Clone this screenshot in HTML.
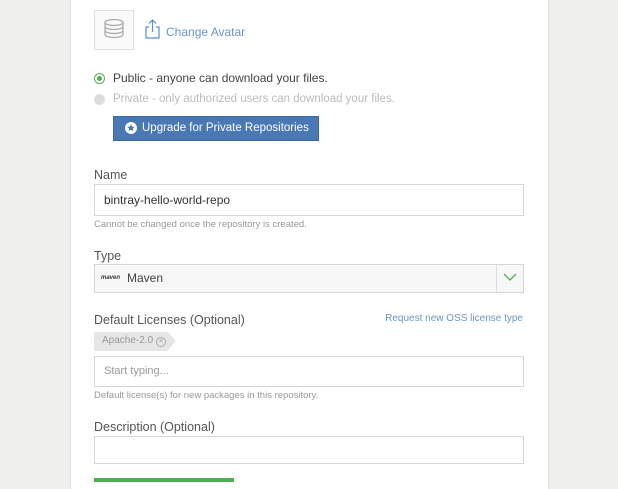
<!DOCTYPE html>
<html><head><style>
body{margin:0;width:618px;height:480px;background:#efefed;font-family:"Liberation Sans",sans-serif;overflow:hidden;position:relative}
.panel{position:absolute;left:70px;top:-1px;width:477px;height:490px;background:#fff;border-left:1px solid #ddd;border-right:1px solid #ddd}
.a{position:absolute;white-space:nowrap}
.inp{position:absolute;left:94px;width:428px;border:1px solid #d6d6d6;background:#fff}
.lbl{font-size:12.5px;color:#555}
.help{font-size:9.5px;color:#999}
</style></head><body>
<div class="panel"></div>
<div class="a" style="left:94px;top:10px;width:38px;height:38px;border:1px solid #ddd;background:#fafafa"></div>
<svg class="a" style="left:103px;top:18px" width="22" height="22" viewBox="0 0 22 22" fill="none" stroke="#aaa" stroke-width="1.3"><ellipse cx="11" cy="4.5" rx="9" ry="3"/><path d="M2 4.5v12c0 1.7 4 3 9 3s9-1.3 9-3v-12M2 8.5c0 1.7 4 3 9 3s9-1.3 9-3M2 12.5c0 1.7 4 3 9 3s9-1.3 9-3"/></svg>
<svg class="a" style="left:145px;top:19px" width="15" height="20" viewBox="0 0 15 20" fill="none" stroke="#5b8fc7" stroke-width="1.2"><path d="M4 8H1v11h13V8h-3M7.5 13V1M4 4.5L7.5 1 11 4.5"/></svg>
<div class="a" style="left:166px;top:25px;font-size:12px;color:#6d95c0">Change Avatar</div>
<div class="a" style="left:94px;top:73px;width:9px;height:9px;border:1px solid #5cac5c;border-radius:50%"></div>
<div class="a" style="left:97px;top:76px;width:5px;height:5px;background:#4caf50;border-radius:50%"></div>
<div class="a" style="left:113px;top:71px;font-size:12px;color:#444">Public - anyone can download your files.</div>
<div class="a" style="left:94px;top:94px;width:11px;height:11px;background:#ddd;border-radius:50%"></div>
<div class="a" style="left:113px;top:93px;font-size:11.5px;color:#bbb">Private - only authorized users can download your files.</div>
<div class="a" style="left:113px;top:116px;width:204px;height:23px;background:#4a78b4;border:1px solid #3e68a0"></div>
<svg class="a" style="left:125px;top:122px" width="12" height="12" viewBox="0 0 12 12"><circle cx="6" cy="6" r="6" fill="#fff"/><path d="M6 2.3l1.1 2.3 2.5.3-1.8 1.7.5 2.5L6 7.9 3.7 9.1l.5-2.5-1.8-1.7 2.5-.3z" fill="#4a78b4"/></svg>
<div class="a" style="left:142px;top:121px;font-size:11.5px;line-height:14px;color:#fff">Upgrade for Private Repositories</div>
<div class="a lbl" style="left:94px;top:168px">Name</div>
<div class="inp" style="top:184px;height:30px"></div>
<div class="a" style="left:104px;top:193px;font-size:12px;color:#333">bintray-hello-world-repo</div>
<div class="a help" style="left:94px;top:219px">Cannot be changed once the repository is created.</div>
<div class="a lbl" style="left:94px;top:249px">Type</div>
<div class="inp" style="top:264px;height:27px;background:#f7f7f7"></div>
<div class="a" style="left:496px;top:265px;width:1px;height:27px;background:#ddd"></div>
<svg class="a" style="left:503px;top:273px" width="14" height="9" viewBox="0 0 14 9" fill="none" stroke="#4caf50" stroke-width="1.3"><path d="M1 1l6 6 6-6"/></svg>
<div class="a" style="left:101px;top:275px;font-size:6px;font-weight:bold;font-style:italic;color:#333">maven</div>
<div class="a" style="left:127px;top:271px;font-size:12px;color:#444">Maven</div>
<div class="a lbl" style="left:94px;top:313px">Default Licenses (Optional)</div>
<div class="a" style="right:95px;top:313px;font-size:10px;color:#6d95c0">Request new OSS license type</div>
<div class="a" style="left:94px;top:332px;width:74px;height:19px;background:#e6e6e6"></div>
<div class="a" style="left:168px;top:332px;width:0;height:0;border-top:9.5px solid transparent;border-bottom:9.5px solid transparent;border-left:8px solid #e6e6e6"></div>
<div class="a" style="left:102px;top:335px;font-size:10px;line-height:12px;color:#999">Apache-2.0</div>
<div class="a" style="left:156px;top:337px;width:8px;height:8px;border:1px solid #aaa;border-radius:50%;font-size:7px;line-height:8px;text-align:center;color:#999">×</div>
<div class="inp" style="top:356px;height:29px"></div>
<div class="a" style="left:104px;top:365px;font-size:11px;color:#999">Start typing...</div>
<div class="a help" style="left:94px;top:390px">Default license(s) for new packages in this repository.</div>
<div class="a lbl" style="left:94px;top:420px">Description (Optional)</div>
<div class="inp" style="top:436px;height:26px"></div>
<div class="a" style="left:94px;top:478px;width:140px;height:4px;background:#4caf50"></div>
</body></html>
